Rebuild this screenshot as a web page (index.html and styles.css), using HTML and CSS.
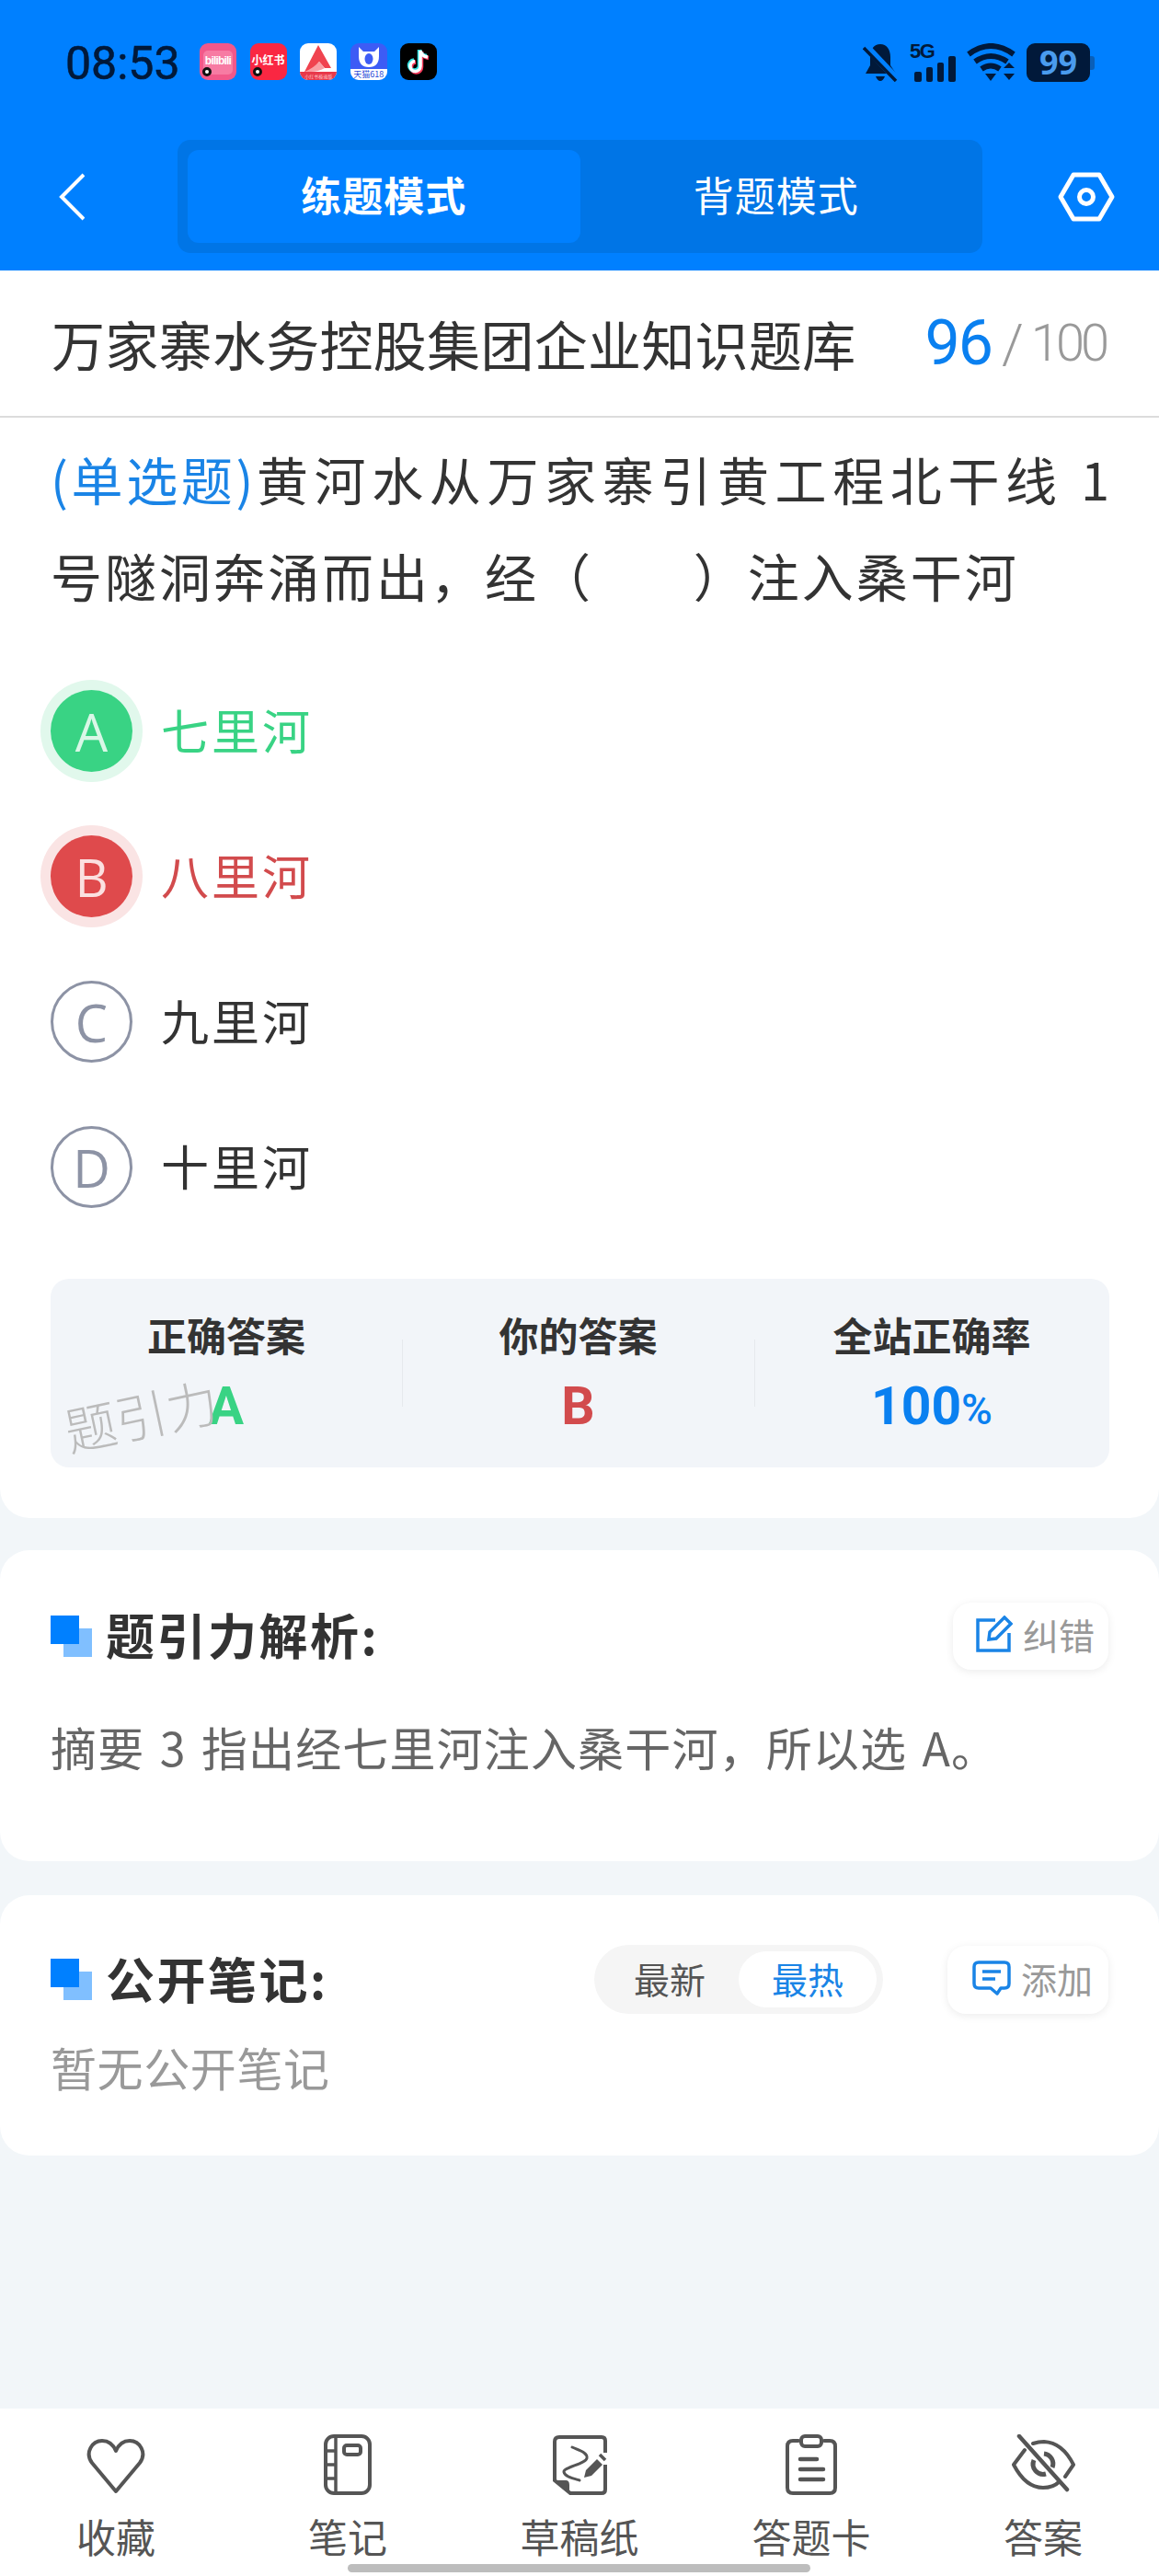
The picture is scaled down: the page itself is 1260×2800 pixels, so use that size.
FILE: index.html
```html
<!DOCTYPE html>
<html lang="zh-CN">
<head>
  <meta charset="UTF-8">
  <meta name="viewport" content="width=device-width, initial-scale=1.0">
  <title>题引力</title>
  <link rel="stylesheet" href="styles.css">
</head>
<body>
  <header class="header">
    <div class="status-bar">
      <span class="clock">08:53</span>
      <div class="app-icons">
        <div class="app app-bili"><span>bilibili</span><i class="app-dot"></i></div>
        <div class="app app-xhs"><span>小红书</span><i class="app-dot"></i></div>
        <div class="app app-a">
          <svg viewBox="0 0 40 40" width="40" height="40"><path d="M20 2 L34 27 L27 27 L21 20 L12 31 L5 31 Z" fill="#f0434f"/><path d="M5 31 Q15 27 21 20 L27 27 Q20 31 12 31 Z" fill="#f9a0a5"/></svg>
          <b>小红书极速版</b>
        </div>
        <div class="app app-tmall">
          <svg viewBox="0 0 40 28" width="40" height="28"><path d="M9 4 L14 9 H26 L31 4 L31 14 Q31 26 20 26 Q9 26 9 14 Z" fill="#fff"/><ellipse cx="20" cy="17" rx="4.500" ry="6" fill="#3d5cf5"/></svg>
          <em>天猫618</em>
        </div>
        <div class="app app-tiktok">
          <svg viewBox="0 0 40 40" width="40" height="40"><path d="M22 8 V25 A5.5 5.5 0 1 1 16 19.500 M22 8 Q23 14 30 15" fill="none" stroke="#ff3b5c" stroke-width="4.500" transform="translate(1 1)"/><path d="M22 8 V25 A5.5 5.5 0 1 1 16 19.500 M22 8 Q23 14 30 15" fill="none" stroke="#30e0e0" stroke-width="4.500" transform="translate(-1 -1)"/><path d="M22 8 V25 A5.5 5.5 0 1 1 16 19.500 M22 8 Q23 14 30 15" fill="none" stroke="#fff" stroke-width="3.500"/></svg>
        </div>
      </div>
      <div class="status-right">
        <svg viewBox="0 0 38 42" width="38" height="42" class="st-bell"><path d="M19 1 C26 1 30 7 30 15 V24 L36 33 H3 L8 24 V15 C8 7 12 1 19 1 Z M14 36 H24 Q22 41 19 41 Q16 41 14 36 Z" fill="#01193a"/><path d="M3 3 L37 39" stroke="#0080ff" stroke-width="8"/><path d="M1 5 L36 41" stroke="#01193a" stroke-width="3.500"/></svg>
        <div class="st-signal">
          <span class="st-5g">5G</span>
          <svg viewBox="0 0 48 28" width="48" height="28"><rect x="2" y="17" width="8" height="11" rx="2"/><rect x="15" y="12" width="7" height="16" rx="2"/><rect x="27" y="7" width="7" height="21" rx="2"/><rect x="39" y="0" width="8" height="28" rx="2"/></svg>
        </div>
        <svg viewBox="0 0 54 42" width="54" height="42" class="st-wifi"><g fill="none" stroke="#01193a" stroke-width="6"><path d="M2 12 Q26 -6 51 12"/><path d="M9 20 Q26 8 44 20"/><path d="M16 28 Q26 21 36 28"/></g><path d="M20 33 H32 L26 41 Z M40 27 L46 21 L52 27 Z M40 33 H52 L46 40 Z" fill="#01193a"/></svg>
        <div class="st-battery"><span>99</span></div>
      </div>
    </div>
    <div class="nav-bar">
      <svg viewBox="0 0 28 52" width="28" height="52"><path d="M27 2 L3 26 L27 50" fill="none" stroke="#fff" stroke-width="4"/></svg>
      <div class="mode-tabs">
        <div class="mode-tab active">练题模式</div>
        <div class="mode-tab">背题模式</div>
      </div>
      <svg class="nav-settings" viewBox="0 0 62 54" width="62" height="54"><path d="M17 3 H45 L59 27 L45 51 H17 L3 27 Z" fill="none" stroke="#fff" stroke-width="5" stroke-linejoin="round"/><circle cx="31" cy="27" r="7.500" fill="none" stroke="#fff" stroke-width="5"/></svg>
    </div>
  </header>

  <main class="content">
    <section class="card question-card">
      <div class="bank-row">
        <h1 class="bank-title">万家寨水务控股集团企业知识题库</h1>
        <div class="counter"><b>96</b><span class="slash">/</span><span class="total">100</span></div>
      </div>
      <p class="question"><span class="q-first"><span class="q-type">(单选题)</span>黄河水从万家寨引黄工程北干线 1</span>号隧洞奔涌而出，经（&nbsp;&nbsp;&nbsp;&nbsp;&nbsp;&nbsp;&nbsp;）注入桑干河</p>
      <ul class="options">
        <li class="option right"><span class="opt-mark">A</span><span class="opt-text">七里河</span></li>
        <li class="option wrong"><span class="opt-mark">B</span><span class="opt-text">八里河</span></li>
        <li class="option"><span class="opt-mark">C</span><span class="opt-text">九里河</span></li>
        <li class="option"><span class="opt-mark">D</span><span class="opt-text">十里河</span></li>
      </ul>
      <div class="stats">
        <div class="stat">
          <div class="stat-label">正确答案</div>
          <div class="stat-value green">A</div>
        </div>
        <div class="stat">
          <div class="stat-label">你的答案</div>
          <div class="stat-value red">B</div>
        </div>
        <div class="stat">
          <div class="stat-label">全站正确率</div>
          <div class="stat-value blue">100<small>%</small></div>
        </div>
        <div class="watermark">题引力</div>
      </div>
    </section>

    <section class="card analysis-card">
      <div class="card-head">
        <h2 class="card-title"><i class="title-mark"></i>题引力解析:</h2>
        <div class="small-btn">
          <svg viewBox="0 0 40 40" width="40" height="40"><path d="M21 5 H2 V38 H36 V19" fill="none" stroke="#1a84e6" stroke-width="3.500"/><path d="M14 26 L15 18 L31 2 L38 9 L22 25 Z" fill="none" stroke="#1a84e6" stroke-width="3.500"/></svg>
          纠错
        </div>
      </div>
      <p class="analysis-text">摘要 3 指出经七里河注入桑干河，所以选 A。</p>
    </section>

    <section class="card notes-card">
      <div class="card-head">
        <h2 class="card-title"><i class="title-mark"></i>公开笔记:</h2>
        <div class="head-right">
          <div class="sort-toggle">
            <span>最新</span>
            <span class="on">最热</span>
          </div>
          <div class="small-btn add-btn">
            <svg viewBox="0 0 42 38" width="42" height="38"><path d="M7 2 H35 Q40 2 40 7 V25 Q40 30 35 30 H31 L27 36 L20 30 H7 Q2 30 2 25 V7 Q2 2 7 2 Z" fill="none" stroke="#1a84e6" stroke-width="3.500" stroke-linejoin="round"/><path d="M11 12 H31 M11 20 H25" stroke="#1a84e6" stroke-width="3.500"/></svg>
            添加
          </div>
        </div>
      </div>
      <p class="no-notes">暂无公开笔记</p>
    </section>
  </main>

  <nav class="tab-bar">
    <div class="tab">
      <svg viewBox="0 0 66 66" width="66" height="66"><path d="M33 62 L7 31 C-1 20 7 7 18 7 C25 7 30 11 33 18 C36 11 41 7 48 7 C59 7 67 20 59 31 Z" fill="none" stroke="#555" stroke-width="4" stroke-linejoin="round"/></svg>
      <span>收藏</span>
    </div>
    <div class="tab">
      <svg viewBox="0 0 66 66" width="66" height="66"><rect x="9" y="2" width="48" height="62" rx="9" fill="none" stroke="#555" stroke-width="4"/><path d="M20 2 V64 M9 18 H20 M9 33 H20 M9 48 H20" stroke="#555" stroke-width="3.500"/><rect x="29" y="12" width="18" height="10" rx="3" fill="none" stroke="#555" stroke-width="4"/></svg>
      <span>笔记</span>
    </div>
    <div class="tab">
      <svg viewBox="0 0 66 66" width="66" height="66"><path d="M61 20 V7 Q61 3 57 3 H11 Q6 3 6 8 V50 L23 64 H57 Q61 64 61 60 V33" fill="none" stroke="#555" stroke-width="4"/><path d="M7 50 H18 Q22 50 22 55 V63 Z" fill="#555"/><path d="M25 14 C34 18 42 20 41 26 C40 32 15 36 16 41 C17 46 26 48 33 50" fill="none" stroke="#555" stroke-width="3" stroke-linecap="round"/><path d="M38 47 L40 39 L52 27 L58 33 L46 45 Z" fill="#555"/><path d="M55 22 L61 28" stroke="#555" stroke-width="3.500"/></svg>
      <span>草稿纸</span>
    </div>
    <div class="tab">
      <svg viewBox="0 0 66 66" width="66" height="66"><path d="M19 7 H13 Q7 7 7 13 V58 Q7 64 13 64 H53 Q59 64 59 58 V13 Q59 7 53 7 H47" fill="none" stroke="#555" stroke-width="4" stroke-linecap="round"/><rect x="22" y="2" width="22" height="11" rx="4" fill="none" stroke="#555" stroke-width="4"/><path d="M21 27 H39 M21 38 H46 M21 49 H46" stroke="#555" stroke-width="4.500" stroke-linecap="round"/></svg>
      <span>答题卡</span>
    </div>
    <div class="tab">
      <svg viewBox="0 0 70 66" width="70" height="66"><path d="M15 17 L3 33 Q16 58 35 58 Q46 58 52 52 M24 10 Q30 8 36 8 Q56 9 68 33 L59 46" fill="none" stroke="#555" stroke-width="4" stroke-linecap="round" stroke-linejoin="round"/><path d="M9 2 L61 60" stroke="#555" stroke-width="4.500" stroke-linecap="round"/><path d="M25 28 A11 11 0 0 0 38 43 M36 21 A11 11 0 0 1 45 36" fill="none" stroke="#555" stroke-width="5"/></svg>
      <span>答案</span>
    </div>
    <div class="home-bar"></div>
  </nav>
</body>
</html>
```

FILE: styles.css
```css
* {
  margin: 0;
  padding: 0;
  box-sizing: border-box;
}

body {
  width: 1260px;
  height: 2800px;
  overflow: hidden;
  display: flex;
  flex-direction: column;
  background: #f2f6f9;
  font-family: "Noto Sans CJK SC", "Noto Sans", sans-serif;
  color: #333;
}

/* Top blue area */
.header {
  height: 294px;
  flex-shrink: 0;
  background: #0080ff;
}

.status-bar {
  height: 152px;
  padding: 47px 75px 0 71px;
  display: flex;
  align-items: flex-start;
}

.clock {
  width: 146px;
  font-family: Roboto, sans-serif;
  font-size: 50px;
  font-weight: 400;
  line-height: 44px;
  color: #01193a;
  -webkit-text-stroke: 0.6px #01193a;
}

.app-icons {
  display: flex;
  gap: 14.6px;
}

.app {
  width: 40px;
  height: 40px;
  border-radius: 9px;
  position: relative;
  overflow: hidden;
  text-align: center;
  color: #fff;
}

.app-bili {
  background: #f2588a;
  font: bold 12px/38px "Liberation Sans", sans-serif;
  letter-spacing: -0.8px;
}

.app-bili::before {
  content: "";
  position: absolute;
  left: 4px;
  right: 4px;
  top: 8px;
  bottom: 6px;
  border-radius: 5px;
  background: #f77ba3;
}

.app-bili span {
  position: relative;
}

.app-xhs {
  background: #fa2742;
  font-size: 12px;
  line-height: 36px;
  font-weight: 700;
}

.app-dot {
  position: absolute;
  left: 3px;
  bottom: 4px;
  width: 10px;
  height: 10px;
  border-radius: 50%;
  background: #fff;
  border: 3px solid #111;
}

.app-a {
  background: #fff;
}

.app-a b {
  position: absolute;
  left: 0;
  right: 0;
  bottom: 0;
  height: 9px;
  background: #e8394a;
  font-size: 5px;
  line-height: 9px;
  font-weight: 400;
  color: #ffc9cd;
}

.app-tmall {
  background: #3d5cf5;
  line-height: 0;
}

.app-tmall em {
  display: block;
  height: 12px;
  background: #fff;
  color: #2a48d8;
  font-size: 9px;
  line-height: 12px;
  font-style: normal;
}

.app-tiktok {
  background: #000;
}

.status-right {
  margin-left: auto;
  display: flex;
  align-items: flex-start;
}

.st-signal {
  width: 50px;
  margin-left: 13px;
  position: relative;
  height: 42px;
  fill: #01193a;
}

.st-signal svg {
  position: absolute;
  left: 3px;
  bottom: 0;
}

.st-5g {
  position: absolute;
  left: 0;
  top: -2px;
  font: bold 22px/22px "Liberation Sans", sans-serif;
  letter-spacing: -1.5px;
  color: #01193a;
}

.st-wifi {
  margin-left: 12px;
}

.st-battery {
  width: 69px;
  height: 42px;
  margin-left: 11px;
  border-radius: 9px;
  background: #01193a;
  position: relative;
  text-align: center;
  font: 700 36px/42px "Noto Sans", sans-serif;
  color: #4a9bee;
}

.st-battery::after {
  content: "";
  position: absolute;
  right: -5px;
  top: 14px;
  width: 5px;
  height: 15px;
  border-radius: 0 3px 3px 0;
  background: #0a5fb8;
}

.nav-bar {
  height: 123px;
  padding-left: 64px;
  display: flex;
  align-items: center;
}

.mode-tabs {
  width: 875px;
  height: 123px;
  margin-left: 101px;
  padding: 11px;
  display: flex;
  background: #0075e6;
  border-radius: 14px;
}

.nav-settings {
  margin-left: 82px;
}

.mode-tab {
  flex: 1;
  text-align: center;
  font-size: 44px;
  line-height: 97px;
  letter-spacing: 1px;
  color: #fff;
  border-radius: 12px;
}

.mode-tab.active {
  background: #0080ff;
  font-weight: 700;
}

/* Cards */
.content {
  flex: 1;
  display: flex;
  flex-direction: column;
  gap: 35px;
}

.card {
  background: #fff;
  border-radius: 32px;
  padding: 0 55px;
}

.question-card {
  border-radius: 0 0 32px 32px;
  height: 1356px;
}

.bank-row {
  height: 160px;
  margin: 0 -55px;
  padding: 0 55px 0 56px;
  display: flex;
  align-items: center;
  justify-content: space-between;
  border-bottom: 2px solid #dcdcdc;
}

.bank-title {
  font-size: 58px;
  font-weight: 400;
  letter-spacing: 0.3px;
  line-height: 80px;
  color: #333;
}

.counter {
  display: flex;
  align-items: center;
  font-family: Roboto, sans-serif;
  color: #999;
}

.counter b {
  font-size: 68px;
  font-weight: 400;
  letter-spacing: -2px;
  color: #0a80f0;
  margin-right: 11px;
}

.slash {
  font-size: 60px;
  font-weight: 300;
  margin-right: 8px;
}

.total {
  font-size: 56px;
  font-weight: 300;
  letter-spacing: -4px;
  margin-right: 3px;
}

.question {
  margin-top: 13px;
  font-size: 56px;
  line-height: 105px;
  letter-spacing: 3px;
  color: #333;
}

.q-first {
  display: block;
  margin-right: -4px;
  text-align: justify;
  text-align-last: justify;
}

.q-type {
  letter-spacing: 0;
  color: #1a84e6;
}

.options {
  list-style: none;
  margin-top: 73px;
  display: flex;
  flex-direction: column;
  gap: 69px;
}

.option {
  height: 89px;
  display: flex;
  align-items: center;
  font-size: 52px;
  letter-spacing: 3px;
  color: #333;
}

.opt-text {
  margin-top: -4px;
}

.opt-mark {
  width: 89px;
  height: 89px;
  margin-right: 31px;
  border: 3px solid #8d93a5;
  border-radius: 50%;
  display: flex;
  align-items: center;
  justify-content: center;
  font-family: "Open Sans", sans-serif;
  font-size: 56px;
  letter-spacing: 0;
  color: #8d93a5;
}

.option.right {
  color: #39d384;
}

.option.right .opt-mark {
  border: none;
  background: #39d384;
  color: #d9f7e7;
  box-shadow: 0 0 0 11px #e1f8ec;
}

.option.wrong {
  color: #d24b4d;
}

.option.wrong .opt-mark {
  border: none;
  background: #df4a4c;
  color: #fbe0e0;
  box-shadow: 0 0 0 11px #fae4e4;
}

.stats {
  position: relative;
  height: 205px;
  margin-top: 77px;
  margin-right: -1px;
  border-radius: 20px;
  background: #f2f5f9;
  display: grid;
  grid-template-columns: 382px 383px 386px;
}

.stat {
  position: relative;
  text-align: center;
  padding-top: 31px;
}

.stat + .stat::before {
  content: "";
  position: absolute;
  left: 0;
  top: 66px;
  height: 73px;
  border-left: 1px solid #e6e9ed;
}

.stat-label {
  font-size: 43px;
  line-height: 58px;
  font-weight: 700;
  color: #333;
}

.stat-value {
  margin-top: 20px;
  font-family: Roboto, sans-serif;
  font-size: 57px;
  line-height: 60px;
  font-weight: 700;
}

.stat-value small {
  font-size: 46px;
  font-weight: 500;
}

.green {
  color: #39d384;
}

.red {
  color: #d24b4d;
}

.blue {
  color: #0a80f0;
}

.watermark {
  position: absolute;
  left: 14px;
  top: 117px;
  font-size: 56px;
  line-height: 60px;
  font-weight: 300;
  color: #bbb;
  transform: rotate(-12deg);
}

.card-head {
  display: flex;
  align-items: center;
  justify-content: space-between;
}

.card-title {
  display: flex;
  align-items: center;
  padding-bottom: 4px;
  font-size: 53px;
  line-height: 70px;
  letter-spacing: 2.5px;
  font-weight: 700;
  color: #333;
}

.title-mark {
  position: relative;
  width: 45px;
  height: 45px;
  margin: 4px 15px 0 0;
}

.title-mark::before,
.title-mark::after {
  content: "";
  position: absolute;
  width: 31px;
  height: 31px;
}

.title-mark::before {
  right: 0;
  bottom: 0;
  background: #80bfff;
}

.title-mark::after {
  left: 0;
  top: 0;
  background: #0080ff;
}

.small-btn {
  height: 73px;
  padding: 0 15px 4px 25px;
  display: flex;
  align-items: center;
  gap: 11px;
  background: #fff;
  border-radius: 20px;
  box-shadow: 0 2px 10px rgba(0, 0, 0, 0.08);
  font-size: 39px;
  color: #999;
}

.analysis-card {
  height: 338px;
  padding-top: 56px;
}

.analysis-text {
  margin-top: 48px;
  font-size: 50px;
  line-height: 70px;
  letter-spacing: 1.15px;
  word-spacing: 4px;
  color: #666;
}

.notes-card {
  height: 283px;
  margin-top: 2px;
  padding-top: 54px;
}

.head-right {
  display: flex;
  align-items: center;
  gap: 70px;
}

.sort-toggle {
  width: 314px;
  height: 75px;
  padding: 7px;
  display: flex;
  align-items: center;
  background: #f5f5f5;
  border-radius: 38px;
  font-size: 39px;
  color: #555;
}

.sort-toggle span {
  width: 150px;
  height: 61px;
  text-align: center;
  line-height: 59px;
  border-radius: 31px;
}

.sort-toggle .on {
  background: #fff;
  color: #1a84e6;
}

.add-btn {
  height: 74px;
  padding-left: 27px;
  padding-right: 15px;
  width: 175px;
}

.no-notes {
  margin-top: 22px;
  font-size: 50px;
  line-height: 70px;
  letter-spacing: 0.6px;
  color: #999;
}

/* Bottom bar */
.tab-bar {
  position: relative;
  height: 182px;
  flex-shrink: 0;
  padding-top: 28px;
  display: grid;
  grid-template-columns: repeat(5, 1fr);
  background: #fff;
}

.tab {
  display: flex;
  flex-direction: column;
  align-items: center;
  font-size: 43px;
  line-height: 60px;
  color: #555;
}

.tab span {
  margin-top: 14px;
}

.home-bar {
  position: absolute;
  left: 378px;
  bottom: 4px;
  width: 503px;
  height: 9px;
  border-radius: 5px;
  background: #bdbdbd;
}
```
